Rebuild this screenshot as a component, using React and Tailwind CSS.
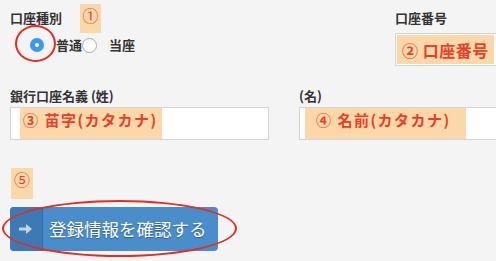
import React from 'react';

const font = { fontFamily: '"Noto Sans CJK JP", "Noto Sans", sans-serif' };

const Mark = ({ children, className = '' }) => (
    <span className={`bg-[#fad8a9] text-[#ea3f2a] font-bold ${className}`}>{children}</span>
);

const App = () => {
    return (
        <div className="relative w-[496px] h-[261px] overflow-hidden bg-[#f4f4f4] text-[#333]" style={font}>
            {/* row 1 */}
            <div className="flex pt-[9px] pl-[10px]">
                <div className="w-[385px] shrink-0">
                    <div className="flex items-start">
                        <label className="text-[13px] font-bold leading-[18px]">口座種別</label>
                        <Mark className="ml-[18px] -mt-[5px] w-[21px] h-[29px] flex justify-center pt-[1px] text-[16px] leading-[20px] font-normal">①</Mark>
                    </div>
                    <div className="flex items-center mt-[2px] pl-[20px] h-[20px]">
                        <span className="w-[14px] h-[14px] rounded-full bg-[#3c97f6] flex items-center justify-center">
                            <span className="w-[4px] h-[4px] rounded-full bg-white" />
                        </span>
                        <span className="ml-[12px] text-[13px] font-bold">普通</span>
                        <span className="w-[15px] h-[15px] rounded-full bg-white border border-[#aaa]" />
                        <span className="ml-[12px] text-[13px] font-bold">当座</span>
                    </div>
                </div>
                <div className="shrink-0">
                    <label className="block text-[13px] font-bold leading-[18px]">口座番号</label>
                    <div className="mt-[6px] w-[140px] h-[33px] bg-white border border-[#d4d4d4] pl-[1px] py-[1px] flex">
                        <Mark className="w-[97px] flex items-center pl-[5px] text-[16px] leading-[20px] tracking-[0.5px]">② 口座番号</Mark>
                    </div>
                </div>
            </div>

            {/* row 2 */}
            <div className="flex pt-[21px] pl-[10px]">
                <div className="w-[289px] shrink-0">
                    <label className="block text-[13px] font-bold leading-[18px]">銀行口座名義 (姓)</label>
                    <div className="mt-[2px] w-[259px] h-[33px] bg-white border border-[#d4d4d4] pl-[9px] flex">
                        <Mark className="w-[142px] h-[31px] pl-[3px] pt-[2px] text-[15px] leading-[20px] tracking-[1.5px] whitespace-nowrap">③ 苗字(カタカナ)</Mark>
                    </div>
                </div>
                <div className="shrink-0">
                    <label className="block text-[13px] font-bold leading-[18px]">(名)</label>
                    <div className="mt-[2px] w-[220px] h-[33px] bg-white border border-[#d4d4d4] pl-[5px] flex">
                        <Mark className="w-[161px] h-[31px] pl-[11px] pt-[2px] text-[15px] leading-[20px] tracking-[1.5px] whitespace-nowrap">④ 名前(カタカナ)</Mark>
                    </div>
                </div>
            </div>

            {/* row 3 */}
            <div className="pl-[11px] pt-[28px]">
                <Mark className="block w-[22px] h-[31px] text-center pt-[1px] text-[16px] leading-[20px] font-normal">⑤</Mark>
            </div>
            <div className="pl-[10px] pt-[8px]">
                <button className="flex w-[208px] h-[44px] rounded-[4px] overflow-hidden bg-[#4a8dcb] text-white">
                    <span className="w-[33px] h-full bg-[#3d79b5] border-r border-[#346aa0] flex items-center justify-center">
                        <svg width="14" height="12" viewBox="0 0 14 12">
                            <path d="M0 4.5h7V1l6 5-6 5V7.5H0z" fill="#c9d3dd" />
                        </svg>
                    </span>
                    <span className="flex-1 flex items-center pl-[6px] text-[17.5px] [text-shadow:0_1px_1px_rgba(0,0,0,0.35)]">登録情報を確認する</span>
                </button>
            </div>

            {/* annotation ellipses */}
            <div className="absolute left-[15px] top-[25px] w-[41px] h-[37px] rounded-[50%] border-2 border-[#e52b22]" />
            <div className="absolute left-[2px] top-[200px] w-[235px] h-[57px] rounded-[50%] border-2 border-[#e52b22]" />
        </div>
    );
};

export default App;
